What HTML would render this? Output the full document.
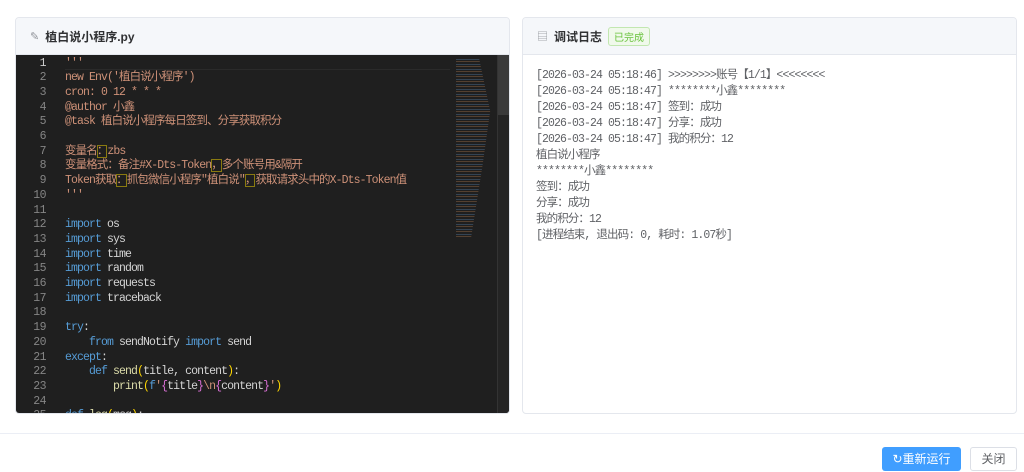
<!DOCTYPE html>
<html><head><meta charset="utf-8"><style>
*{margin:0;padding:0;box-sizing:border-box}
body{width:1024px;height:472px;background:#fff;font-family:"Liberation Sans","Noto Sans CJK SC",sans-serif;position:relative;overflow:hidden}
.card{position:absolute;top:17px;height:397px;border:1px solid #e4e7ed;border-radius:4px;overflow:hidden;background:#fff}
.hd{height:37px;background:#f5f7fa;border-bottom:1px solid #e4e7ed;display:flex;align-items:center;padding-left:14px;font-size:12px;font-weight:bold;color:#303133}
.mono{font-family:"Liberation Mono","Noto Sans CJK SC",monospace;font-size:11.5px;letter-spacing:-0.9px}
.code{position:absolute;left:0;top:37px;width:494px;height:360px;background:#1f1f1f;overflow:hidden}
.ln,.tx{height:15px;line-height:15px;overflow:visible;font-family:"Liberation Mono","Noto Sans CJK SC",monospace;font-size:11.5px}
.ln{position:absolute;left:0;width:30px;text-align:right;color:#858585;letter-spacing:-0.5px}
.tx{position:absolute;left:49px;white-space:pre;color:#ce9178;letter-spacing:-0.9px}
.k{color:#569cd6}.w{color:#d4d4d4}.y{color:#ffd700}.p{color:#da70d6}.f{color:#dcdcaa}
.b{outline:1px solid #8a7a10;outline-offset:-1px}
.log{position:absolute;left:13px;top:50px;color:#606266;line-height:16px;white-space:pre}
</style></head><body>
<div class="card" style="left:15px;width:495px">
 <div class="hd"><span style="color:#909399;font-weight:normal;margin-right:6px;font-size:11px">✎</span>植白说小程序.py</div>
 <div class="code mono">
  <div style="position:absolute;left:49px;right:60px;top:1px;height:14px;border-bottom:1px solid #2a2a2a"></div>
  <div style="position:absolute;left:440px;top:2px;width:38px;height:180px;opacity:.5;background:repeating-linear-gradient(#1f1f1f 0 2px,#4a6a8a 2px 3px,#1f1f1f 3px 4px,#8a6040 4px 5px);clip-path:polygon(0 0,60% 0,90% 30%,70% 60%,40% 100%,0 100%)"></div>
  <div style="position:absolute;left:481px;top:0;width:13px;height:360px;background:#242424;border-left:1px solid #333"></div>
  <div style="position:absolute;left:482px;top:0;width:12px;height:60px;background:#3a3a3a"></div>
  <div id="lines"></div>
 </div>
</div>
<div class="card" style="left:522px;width:495px">
 <div class="hd"><span style="color:#909399;font-weight:normal;margin-right:6px;font-size:11px">▤</span>调试日志<span style="margin-left:6px;font-weight:normal;font-size:10px;color:#67c23a;background:#f0f9eb;border:1px solid #c2e7b0;border-radius:3px;padding:1px 5px">已完成</span></div>
 <div class="log mono">[2026-03-24 05:18:46] &gt;&gt;&gt;&gt;&gt;&gt;&gt;&gt;账号【1/1】&lt;&lt;&lt;&lt;&lt;&lt;&lt;&lt;
[2026-03-24 05:18:47] ********小鑫********
[2026-03-24 05:18:47] 签到：成功
[2026-03-24 05:18:47] 分享：成功
[2026-03-24 05:18:47] 我的积分：12
植白说小程序
********小鑫********
签到：成功
分享：成功
我的积分：12
[进程结束, 退出码: 0, 耗时: 1.07秒]</div>
</div>
<div style="position:absolute;left:0;right:0;top:433px;border-top:1px solid #ebeef5"></div>
<div style="position:absolute;left:882px;top:447px;width:79px;height:24px;background:#409eff;border-radius:3px;color:#fff;font-size:12px;text-align:center;line-height:24px">↻重新运行</div>
<div style="position:absolute;left:970px;top:447px;width:47px;height:24px;border:1px solid #dcdfe6;border-radius:3px;color:#606266;font-size:12px;text-align:center;line-height:22px">关闭</div>
<script>
var L=[
"'''","new Env('植白说小程序')","cron: 0 12 * * *","@author 小鑫","@task 植白说小程序每日签到、分享获取积分","",
"变量名<span class=b>：</span>zbs","变量格式：备注#X-Dts-Token<span class=b>，</span>多个账号用&amp;隔开","Token获取<span class=b>：</span>抓包微信小程序\"植白说\"<span class=b>，</span>获取请求头中的X-Dts-Token值","'''","",
"<span class=k>import</span> <span class=w>os</span>","<span class=k>import</span> <span class=w>sys</span>","<span class=k>import</span> <span class=w>time</span>","<span class=k>import</span> <span class=w>random</span>","<span class=k>import</span> <span class=w>requests</span>","<span class=k>import</span> <span class=w>traceback</span>","",
"<span class=k>try</span><span class=w>:</span>","    <span class=k>from</span> <span class=w>sendNotify</span> <span class=k>import</span> <span class=w>send</span>","<span class=k>except</span><span class=w>:</span>",
"    <span class=k>def</span> <span class=f>send</span><span class=y>(</span><span class=w>title, content</span><span class=y>)</span><span class=w>:</span>",
"        <span class=f>print</span><span class=y>(</span><span class=k>f</span>'<span class=p>{</span><span class=w>title</span><span class=p>}</span>\\n<span class=p>{</span><span class=w>content</span><span class=p>}</span>'<span class=y>)</span>","","<span class=k>def</span> <span class=f>log</span><span class=y>(</span><span class=w>msg</span><span class=y>)</span><span class=w>:</span>"];
var h="";for(var i=0;i<L.length;i++){var t=0.5+i*14.7;h+='<div class="ln" style="top:'+t+'px;'+(i==0?'color:#ccc':'')+'">'+(i+1)+'</div><div class="tx" style="top:'+t+'px">'+L[i]+'</div>';}
document.getElementById('lines').innerHTML=h;
</script>
</body></html>
